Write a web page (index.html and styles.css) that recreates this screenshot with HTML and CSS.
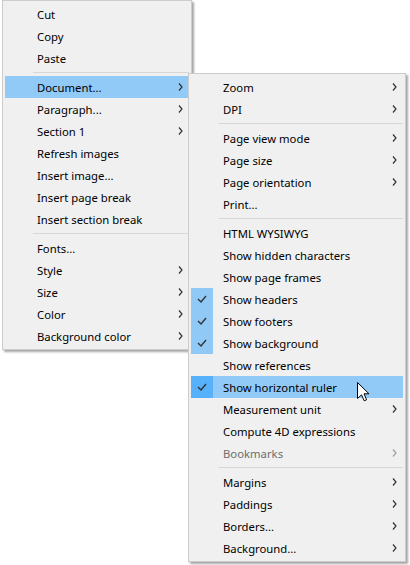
FILE: index.html
```html
<!DOCTYPE html>
<html>
<head>
<meta charset="utf-8">
<link rel="stylesheet" href="styles.css">
</head>
<body>
<div class="stage">
  <div class="menu main">
    <div class="item"><span class="check"></span><span class="label">Cut</span></div>
    <div class="item"><span class="check"></span><span class="label">Copy</span></div>
    <div class="item"><span class="check"></span><span class="label">Paste</span></div>
    <div class="sep"></div>
    <div class="item hover"><span class="check"></span><span class="label">Document...</span><svg class="arrow" viewBox="0 0 5 8"><path d="M1 0.5 L4 4 L1 7.5"/></svg></div>
    <div class="item"><span class="check"></span><span class="label">Paragraph...</span><svg class="arrow" viewBox="0 0 5 8"><path d="M1 0.5 L4 4 L1 7.5"/></svg></div>
    <div class="item"><span class="check"></span><span class="label">Section 1</span><svg class="arrow" viewBox="0 0 5 8"><path d="M1 0.5 L4 4 L1 7.5"/></svg></div>
    <div class="item"><span class="check"></span><span class="label">Refresh images</span></div>
    <div class="item"><span class="check"></span><span class="label">Insert image...</span></div>
    <div class="item"><span class="check"></span><span class="label">Insert page break</span></div>
    <div class="item"><span class="check"></span><span class="label">Insert section break</span></div>
    <div class="sep"></div>
    <div class="item"><span class="check"></span><span class="label">Fonts...</span></div>
    <div class="item"><span class="check"></span><span class="label">Style</span><svg class="arrow" viewBox="0 0 5 8"><path d="M1 0.5 L4 4 L1 7.5"/></svg></div>
    <div class="item"><span class="check"></span><span class="label">Size</span><svg class="arrow" viewBox="0 0 5 8"><path d="M1 0.5 L4 4 L1 7.5"/></svg></div>
    <div class="item"><span class="check"></span><span class="label">Color</span><svg class="arrow" viewBox="0 0 5 8"><path d="M1 0.5 L4 4 L1 7.5"/></svg></div>
    <div class="item"><span class="check"></span><span class="label">Background color</span><svg class="arrow" viewBox="0 0 5 8"><path d="M1 0.5 L4 4 L1 7.5"/></svg></div>
  </div>

  <div class="menu sub">
    <div class="item"><span class="check"></span><span class="label">Zoom</span><svg class="arrow" viewBox="0 0 5 8"><path d="M1 0.5 L4 4 L1 7.5"/></svg></div>
    <div class="item"><span class="check"></span><span class="label">DPI</span><svg class="arrow" viewBox="0 0 5 8"><path d="M1 0.5 L4 4 L1 7.5"/></svg></div>
    <div class="sep"></div>
    <div class="item"><span class="check"></span><span class="label">Page view mode</span><svg class="arrow" viewBox="0 0 5 8"><path d="M1 0.5 L4 4 L1 7.5"/></svg></div>
    <div class="item"><span class="check"></span><span class="label">Page size</span><svg class="arrow" viewBox="0 0 5 8"><path d="M1 0.5 L4 4 L1 7.5"/></svg></div>
    <div class="item"><span class="check"></span><span class="label">Page orientation</span><svg class="arrow" viewBox="0 0 5 8"><path d="M1 0.5 L4 4 L1 7.5"/></svg></div>
    <div class="item"><span class="check"></span><span class="label">Print...</span></div>
    <div class="sep"></div>
    <div class="item"><span class="check"></span><span class="label">HTML WYSIWYG</span></div>
    <div class="item"><span class="check"></span><span class="label">Show hidden characters</span></div>
    <div class="item"><span class="check"></span><span class="label">Show page frames</span></div>
    <div class="item checked"><span class="check"><svg viewBox="0 0 10 8"><path d="M1 4 L4 7 L9 1"/></svg></span><span class="label">Show headers</span></div>
    <div class="item checked"><span class="check"><svg viewBox="0 0 10 8"><path d="M1 4 L4 7 L9 1"/></svg></span><span class="label">Show footers</span></div>
    <div class="item checked"><span class="check"><svg viewBox="0 0 10 8"><path d="M1 4 L4 7 L9 1"/></svg></span><span class="label">Show background</span></div>
    <div class="item"><span class="check"></span><span class="label">Show references</span></div>
    <div class="item checked hover"><span class="check"><svg viewBox="0 0 10 8"><path d="M1 4 L4 7 L9 1"/></svg></span><span class="label">Show horizontal ruler</span></div>
    <div class="item"><span class="check"></span><span class="label">Measurement unit</span><svg class="arrow" viewBox="0 0 5 8"><path d="M1 0.5 L4 4 L1 7.5"/></svg></div>
    <div class="item"><span class="check"></span><span class="label">Compute 4D expressions</span></div>
    <div class="item disabled"><span class="check"></span><span class="label">Bookmarks</span><svg class="arrow" viewBox="0 0 5 8"><path d="M1 0.5 L4 4 L1 7.5"/></svg></div>
    <div class="sep"></div>
    <div class="item"><span class="check"></span><span class="label">Margins</span><svg class="arrow" viewBox="0 0 5 8"><path d="M1 0.5 L4 4 L1 7.5"/></svg></div>
    <div class="item"><span class="check"></span><span class="label">Paddings</span><svg class="arrow" viewBox="0 0 5 8"><path d="M1 0.5 L4 4 L1 7.5"/></svg></div>
    <div class="item"><span class="check"></span><span class="label">Borders...</span><svg class="arrow" viewBox="0 0 5 8"><path d="M1 0.5 L4 4 L1 7.5"/></svg></div>
    <div class="item"><span class="check"></span><span class="label">Background...</span><svg class="arrow" viewBox="0 0 5 8"><path d="M1 0.5 L4 4 L1 7.5"/></svg></div>
  </div>

  <svg class="cursor" viewBox="0 0 13 20"><path d="M0.5 0.5 L0.5 16.5 L4.5 12.8 L7.2 18.8 L9.6 17.8 L7 11.8 L12 11.8 Z"/></svg>
</div>
</body>
</html>
```

FILE: styles.css
```css
html, body {
  margin: 0;
  padding: 0;
  background: #ffffff;
}

.stage {
  position: relative;
  width: 410px;
  height: 565px;
  overflow: hidden;
  font-family: "Noto Sans", "Open Sans", sans-serif;
  font-size: 11.3px;
  color: #000000;
}

.menu {
  box-sizing: border-box;
  background: #f0f0f0;
  border: 1px solid #cccccc;
  padding: 2px;
  display: flex;
  flex-direction: column;
  box-shadow: 2px 2px 2px rgba(0, 0, 0, 0.35);
}

.main {
  width: 190px;
  margin-left: 2px;
}

.sub {
  position: absolute;
  left: 188px;
  top: 73px;
  width: 218px;
}

.item {
  display: flex;
  align-items: center;
  height: 22px;
}

.item.hover {
  background: #91c9f7;
}

.check {
  width: 22px;
  height: 22px;
  flex: none;
  display: flex;
  align-items: center;
  justify-content: center;
}

.checked .check {
  background: #90c8f6;
}

.checked.hover .check {
  background: #56b0fa;
}

.check svg {
  width: 10px;
  height: 8px;
  fill: none;
  stroke: #333333;
  stroke-width: 1.4;
}

.label {
  flex: 1;
  padding-left: 10px;
  padding-top: 1px;
  white-space: nowrap;
  line-height: 21px;
}

.arrow {
  width: 5px;
  height: 8px;
  margin-right: 6px;
  flex: none;
  fill: none;
  stroke: #333333;
  stroke-width: 1.2;
}

.disabled .label {
  color: #6d6d6d;
}

.disabled .arrow {
  stroke: #a0a0a0;
}

.sep {
  height: 1px;
  background: #d7d7d7;
  margin: 3px 0 3px 28px;
}

.cursor {
  position: absolute;
  left: 357px;
  top: 382px;
  width: 13px;
  height: 20px;
  fill: #ffffff;
  stroke: #000000;
  stroke-width: 1;
}
```
